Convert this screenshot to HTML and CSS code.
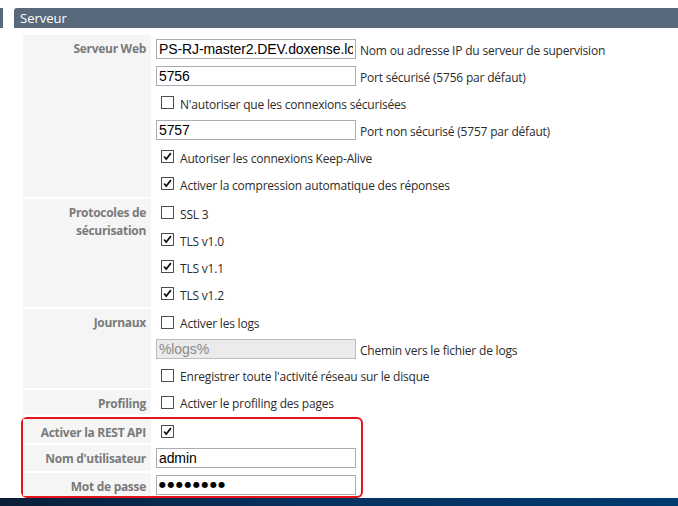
FILE: index.html
```html
<!DOCTYPE html>
<html lang="fr">
<head>
    <meta charset="UTF-8">
    <title>Serveur</title>
    <link rel="stylesheet" href="styles.css">
</head>
<body>
    <div class="top">
        <div class="tab-edge"></div>
        <h2 class="section-bar">Serveur</h2>
    </div>

    <div class="settings">
        <div class="group">
            <div class="label">Serveur Web</div>
            <div class="values">
                <div class="row"><input class="field" type="text" value="PS-RJ-master2.DEV.doxense.local"><span class="hint">Nom ou adresse IP du serveur de supervision</span></div>
                <div class="row"><input class="field" type="text" value="5756"><span class="hint">Port sécurisé (5756 par défaut)</span></div>
                <div class="row"><span class="check"></span><span class="check-text">N'autoriser que les connexions sécurisées</span></div>
                <div class="row"><input class="field" type="text" value="5757"><span class="hint">Port non sécurisé (5757 par défaut)</span></div>
                <div class="row"><span class="check on"><svg viewBox="0 0 13 13"><path d="M2.5 6.5 L5 9.5 L10.5 2.5"/></svg></span><span class="check-text">Autoriser les connexions Keep-Alive</span></div>
                <div class="row"><span class="check on"><svg viewBox="0 0 13 13"><path d="M2.5 6.5 L5 9.5 L10.5 2.5"/></svg></span><span class="check-text">Activer la compression automatique des réponses</span></div>
            </div>
        </div>

        <div class="group">
            <div class="label">Protocoles de sécurisation</div>
            <div class="values">
                <div class="row"><span class="check"></span><span class="check-text">SSL 3</span></div>
                <div class="row"><span class="check on"><svg viewBox="0 0 13 13"><path d="M2.5 6.5 L5 9.5 L10.5 2.5"/></svg></span><span class="check-text">TLS v1.0</span></div>
                <div class="row"><span class="check on"><svg viewBox="0 0 13 13"><path d="M2.5 6.5 L5 9.5 L10.5 2.5"/></svg></span><span class="check-text">TLS v1.1</span></div>
                <div class="row"><span class="check on"><svg viewBox="0 0 13 13"><path d="M2.5 6.5 L5 9.5 L10.5 2.5"/></svg></span><span class="check-text">TLS v1.2</span></div>
            </div>
        </div>

        <div class="group">
            <div class="label">Journaux</div>
            <div class="values">
                <div class="row short"><span class="check"></span><span class="check-text">Activer les logs</span></div>
                <div class="row"><input class="field" type="text" value="%logs%" disabled><span class="hint">Chemin vers le fichier de logs</span></div>
                <div class="row short"><span class="check"></span><span class="check-text">Enregistrer toute l'activité réseau sur le disque</span></div>
            </div>
        </div>

        <div class="group">
            <div class="label">Profiling</div>
            <div class="values">
                <div class="row tight"><span class="check"></span><span class="check-text">Activer le profiling des pages</span></div>
            </div>
        </div>

        <div class="highlight">
            <div class="group">
                <div class="label">Activer la REST API</div>
                <div class="values">
                    <div class="row tight"><span class="check on"><svg viewBox="0 0 13 13"><path d="M2.5 6.5 L5 9.5 L10.5 2.5"/></svg></span></div>
                </div>
            </div>
            <div class="group">
                <div class="label">Nom d'utilisateur</div>
                <div class="values">
                    <div class="row short"><input class="field" type="text" value="admin"></div>
                </div>
            </div>
            <div class="group">
                <div class="label">Mot de passe</div>
                <div class="values">
                    <div class="row pw-row"><input class="field pw" type="text" value="●●●●●●●●"></div>
                </div>
            </div>
        </div>
    </div>

    <div class="taskbar"></div>
</body>
</html>
```

FILE: styles.css
```css
body {
    margin: 0;
    padding-top: 8px;
    background: white;
    font-family: "Open Sans", "Noto Sans", sans-serif;
    overflow: hidden;
    height: 506px;
    box-sizing: border-box;
}
.top {
    display: flex;
    height: 20px;
}
.tab-edge {
    width: 3px;
    background: #57697a;
    margin-right: 11px;
}
.section-bar {
    flex: 1;
    margin: 0;
    background: #57697a;
    color: white;
    font-size: 13px;
    font-weight: normal;
    line-height: 20px;
    padding-left: 6px;
    border-radius: 3px 0 0 0;
}
.settings {
    margin: 7px 0 0 23px;
}
.group {
    display: flex;
    margin-bottom: 2px;
}
.label {
    width: 128px;
    flex-shrink: 0;
    box-sizing: border-box;
    background: #f5f5f5;
    color: #7a7a7a;
    font-weight: bold;
    font-size: 12px;
    letter-spacing: -0.3px;
    line-height: 18px;
    text-align: right;
    padding: 5px 5px 0 10px;
}
.values {
    padding-left: 5px;
}
.row {
    display: flex;
    align-items: center;
    height: 27px;
    font-size: 12px;
    letter-spacing: -0.2px;
    color: #2b2b2b;
    white-space: nowrap;
}
.row.short {
    height: 26px;
}
.row.tight {
    height: 24px;
}
.row.pw-row {
    height: 23px;
}
.field {
    width: 200px;
    height: 20px;
    box-sizing: border-box;
    margin: 0;
    border: 1px solid #abadb3;
    padding: 0 2px;
    font-family: "Liberation Sans", Arial, sans-serif;
    font-size: 14px;
    letter-spacing: -0.1px;
    color: #000;
    background: white;
    outline: none;
}
.field:disabled {
    background: #ebebeb;
    border-color: #bdbdbd;
    color: #8a8a8a;
}
.field.pw {
    font-family: "DejaVu Sans", sans-serif;
    font-size: 8px;
    letter-spacing: 1.5px;
}
.hint {
    margin-left: 4px;
    padding-top: 3px;
}
.check {
    width: 13px;
    height: 13px;
    box-sizing: border-box;
    border: 1px solid #4d4d4d;
    background: white;
    margin-left: 5px;
    flex-shrink: 0;
}
.check svg {
    display: block;
    width: 11px;
    height: 11px;
    fill: none;
    stroke: #111;
    stroke-width: 2;
}
.check-text {
    margin-left: 6px;
    padding-top: 3px;
}
.highlight {
    margin: 3px 0 0 -2px;
    width: 342px;
    box-sizing: border-box;
    border: 2px solid #e8141c;
    border-radius: 6px;
}
.highlight .group:last-child {
    margin-bottom: 0;
}
.taskbar {
    height: 10px;
    background: linear-gradient(to right, #0a1e38, #07305c 40%, #003a70);
}
```
